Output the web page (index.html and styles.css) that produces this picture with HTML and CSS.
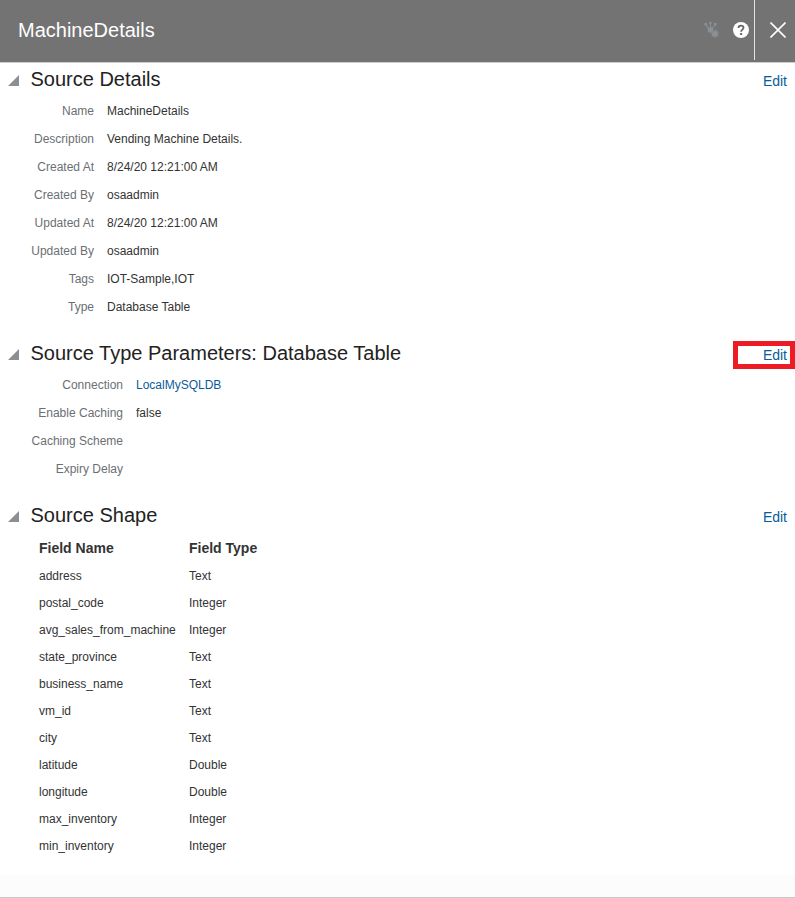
FILE: index.html
```html
<!DOCTYPE html>
<html lang="en">
<head>
<meta charset="utf-8">
<title>MachineDetails</title>
<link rel="stylesheet" href="styles.css">
</head>
<body>
<div class="dialog">
  <header class="bar">
    <h1 class="title">MachineDetails</h1>
    <svg class="wand" width="16" height="17" viewBox="0 0 16 17" aria-hidden="true">
      <g fill="none" stroke="#8b9095" stroke-width="1.1"><path d="M6.4 8.5V2M6 8.5C4 7.5 3.2 6 1.8 3.4M6.8 8.5C9 7.5 9.8 6 11.2 3.4"/></g>
      <g fill="#8b9095"><circle cx="6.4" cy="2" r="1.3"/><circle cx="1.7" cy="3.2" r="1.4"/><circle cx="11.3" cy="3.2" r="1.4"/><circle cx="6.5" cy="9" r="2.8"/>
      <path d="M11.2 8.3l.8 2 1.9-1-.6 2.1 2.2.6-1.9 1.1 1.3 1.9-2.2-.2.1 2.2-1.7-1.5-1.3 1.8-.4-2.2-2.2.5 1.2-1.9-2-1 2.2-.7-.8-2.1 2 .9z"/></g>
    </svg>
    <svg class="help" width="16" height="16" viewBox="0 0 16 16" aria-hidden="true">
      <circle cx="8" cy="8" r="8" fill="#fff"/>
      <path d="M5.5 6C5.5 4.4 6.6 3.6 8 3.6s2.5.8 2.5 2.2c0 1.8-2.4 1.8-2.4 3.9" fill="none" stroke="#666" stroke-width="1.8"/>
      <path d="M7.1 11h2v2h-2z" fill="#666"/>
    </svg>
    <div class="close">
      <svg width="16" height="16" viewBox="0 0 16 16" aria-hidden="true"><path d="M.5.5l15 15M15.5.5l-15 15" stroke="#fff" stroke-width="1.6"/></svg>
    </div>
  </header>
  <main>
    <section class="section">
      <div class="head"><i class="arrow"></i><h2>Source Details</h2><a class="edit">Edit</a></div>
      <dl class="fields">
        <dt>Name</dt><dd>MachineDetails</dd>
        <dt>Description</dt><dd>Vending Machine Details.</dd>
        <dt>Created At</dt><dd>8/24/20 12:21:00 AM</dd>
        <dt>Created By</dt><dd>osaadmin</dd>
        <dt>Updated At</dt><dd>8/24/20 12:21:00 AM</dd>
        <dt>Updated By</dt><dd>osaadmin</dd>
        <dt>Tags</dt><dd>IOT-Sample,IOT</dd>
        <dt>Type</dt><dd>Database Table</dd>
      </dl>
    </section>
    <section class="section">
      <div class="head"><i class="arrow"></i><h2>Source Type Parameters: Database Table</h2><a class="edit marked">Edit</a></div>
      <dl class="fields wide">
        <dt>Connection</dt><dd><a class="link">LocalMySQLDB</a></dd>
        <dt>Enable Caching</dt><dd>false</dd>
        <dt>Caching Scheme</dt><dd></dd>
        <dt>Expiry Delay</dt><dd></dd>
      </dl>
    </section>
    <section class="section">
      <div class="head"><i class="arrow"></i><h2>Source Shape</h2><a class="edit">Edit</a></div>
      <table class="shape">
        <thead><tr><th>Field Name</th><th>Field Type</th></tr></thead>
        <tbody>
          <tr><td>address</td><td>Text</td></tr>
          <tr><td>postal_code</td><td>Integer</td></tr>
          <tr><td>avg_sales_from_machine</td><td>Integer</td></tr>
          <tr><td>state_province</td><td>Text</td></tr>
          <tr><td>business_name</td><td>Text</td></tr>
          <tr><td>vm_id</td><td>Text</td></tr>
          <tr><td>city</td><td>Text</td></tr>
          <tr><td>latitude</td><td>Double</td></tr>
          <tr><td>longitude</td><td>Double</td></tr>
          <tr><td>max_inventory</td><td>Integer</td></tr>
          <tr><td>min_inventory</td><td>Integer</td></tr>
        </tbody>
      </table>
    </section>
  </main>
  <footer class="foot"></footer>
</div>
</body>
</html>
```
FILE: styles.css
```css
* { box-sizing: border-box; }
body {
  margin: 0;
  background: #fff;
  color: #333;
  font: 12px/28px "Liberation Sans", Arial, sans-serif;
}
.dialog { display: flex; flex-direction: column; height: 898px; overflow: hidden; }
.bar {
  display: flex;
  flex: none;
  height: 63px;
  padding-left: 18px;
  background: #737373;
  border-bottom: 1px solid #ccc;
}
.title {
  flex: 1;
  margin: 0;
  color: #fff;
  font-size: 20px;
  font-weight: 400;
  line-height: 60px;
}
.wand { margin: 21px 13px 0 0; }
.help { margin: 22px 5px 0 0; }
.close {
  width: 41px;
  height: 60px;
  padding: 22px 0 0 15px;
  border-left: 1px solid #dfe4e7;
  line-height: 0;
}
main { flex: 1; }
.section { padding-bottom: 16px; }
.section:last-child { padding-bottom: 0; }
.head { display: flex; height: 34px; padding-left: 8px; }
.arrow {
  width: 11px;
  height: 11px;
  margin: 12px 11.5px 0 0;
  background: #8b8e92;
  clip-path: polygon(100% 0, 100% 100%, 0 100%);
}
h2 {
  flex: 1;
  margin: 0;
  color: #222;
  font-size: 20px;
  font-weight: 400;
  line-height: 32px;
}
.edit {
  height: 28px;
  margin-top: 4px;
  padding-right: 8px;
  color: #0a5c99;
  font-size: 14px;
  line-height: 28px;
}
.marked {
  width: 62px;
  padding-right: 3px;
  border: 5px solid #ed1c24;
  line-height: 18px;
  text-align: right;
}
.fields {
  display: grid;
  grid-template-columns: 94px 1fr;
  grid-auto-rows: 28px;
  column-gap: 13px;
  margin: 0;
}
.wide { grid-template-columns: 123px 1fr; }
dt { color: #6b6f73; text-align: right; }
dd { margin: 0; }
.link { color: #0a5c99; }
.shape { margin: 1px 0 0 39px; border-collapse: collapse; table-layout: fixed; width: 250px; }
th, td { height: 27px; padding: 0; line-height: 27px; text-align: left; }
th { height: 29px; font-size: 14px; line-height: 29px; }
th:first-child { width: 150px; }
.foot { flex: none; height: 23px; background: #fcfcfc; border-bottom: 1px solid #c8c8c8; }
```
